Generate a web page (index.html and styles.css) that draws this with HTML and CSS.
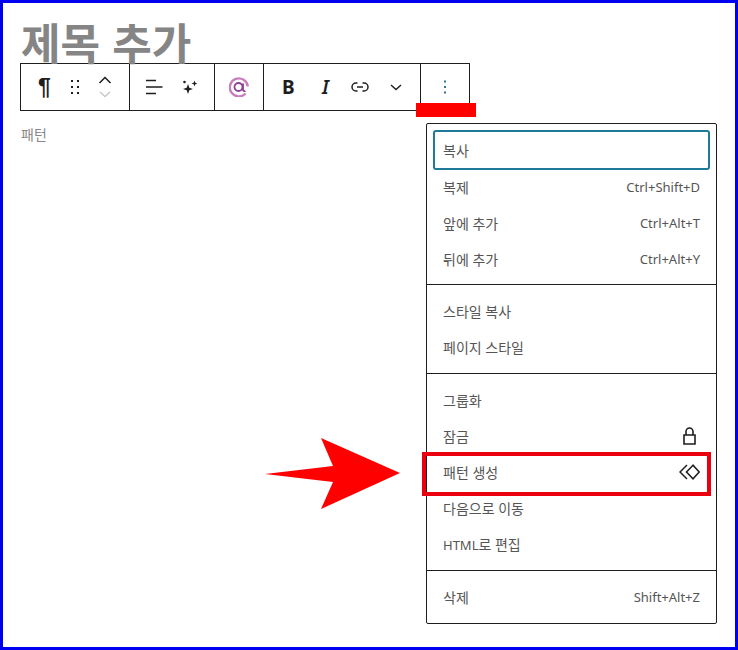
FILE: index.html
```html
<!DOCTYPE html>
<html lang="ko">
<head>
  <meta charset="UTF-8">
  <title>패턴 생성</title>
  <link rel="stylesheet" href="styles.css">
</head>
<body>
  <div class="frame">
    <h1 class="title">제목 추가</h1>

    <div class="toolbar">
      <div class="tool-group group-block">
        <span class="pilcrow">¶</span>
        <svg class="drag" width="10" height="16" viewBox="0 0 10 16"><g fill="#1e1e1e"><rect x="1" y="1" width="2" height="2"/><rect x="7" y="1" width="2" height="2"/><rect x="1" y="7" width="2" height="2"/><rect x="7" y="7" width="2" height="2"/><rect x="1" y="13" width="2" height="2"/><rect x="7" y="13" width="2" height="2"/></g></svg>
        <div class="movers">
          <svg width="14" height="8" viewBox="0 0 14 8"><path d="M1.500 7 7 1.500 12.500 7" fill="none" stroke="#1e1e1e" stroke-width="1.500"/></svg>
          <svg width="12" height="7" viewBox="0 0 12 7"><path d="M1 1 6 5.500 11 1" fill="none" stroke="#c8c8c8" stroke-width="1.400"/></svg>
        </div>
      </div>
      <div class="tool-group group-align">
        <svg width="18" height="16" viewBox="0 0 18 16"><path d="M1 1.500h10M1 8h16.500M1 14.500h10" fill="none" stroke="#1e1e1e" stroke-width="1.500"/></svg>
        <svg width="16" height="16" viewBox="0 0 16 16"><path fill="#1e1e1e" d="M6 5 7.300 8.700 11 10 7.300 11.300 6 15 4.700 11.300 1 10 4.700 8.700Z"/><path fill="#1e1e1e" d="M12.500 1.500 13.300 3.700 15.500 4.500 13.300 5.300 12.500 7.500 11.700 5.300 9.500 4.500 11.700 3.700Z"/><circle cx="2.500" cy="3" r="1.300" fill="#1e1e1e"/></svg>
      </div>
      <div class="tool-group group-ai">
        <svg width="20" height="20" viewBox="0 0 20 20"><path d="M16.500 16.500A9 9 0 1 1 18.800 9.500" fill="none" stroke="#c77fbc" stroke-width="2.400"/><circle cx="9.500" cy="10" r="4" fill="none" stroke="#8e3f96" stroke-width="1.800"/><path d="M14 6.500V12.500C14 14 15.300 14.500 16.500 14" fill="none" stroke="#8e3f96" stroke-width="1.800"/></svg>
      </div>
      <div class="tool-group group-format">
        <span class="fmt-bold">B</span>
        <span class="fmt-italic">I</span>
        <svg class="fmt-link" width="18" height="10" viewBox="0 0 18 10"><path d="M6.500 1H5a4 4 0 0 0 0 8h1.500M11.500 1H13a4 4 0 0 1 0 8h-1.500M6 5h6" fill="none" stroke="#1e1e1e" stroke-width="1.500"/></svg>
        <svg class="fmt-more" width="12" height="7" viewBox="0 0 12 7"><path d="M1 1 6 5.500 11 1" fill="none" stroke="#1e1e1e" stroke-width="1.400"/></svg>
      </div>
      <div class="tool-group group-more">
        <svg width="4" height="14" viewBox="0 0 4 14"><g fill="#2f7590"><rect x="1" y="0.500" width="2" height="2"/><rect x="1" y="6" width="2" height="2"/><rect x="1" y="11.500" width="2" height="2"/></g></svg>
      </div>
    </div>

    <p class="pattern-label">패턴</p>

    <div class="menu">
      <div class="menu-group first">
        <div class="menu-item is-focused"><span class="label">복사</span></div>
        <div class="menu-item"><span class="label">복제</span><span>Ctrl+Shift+D</span></div>
        <div class="menu-item"><span class="label">앞에 추가</span><span>Ctrl+Alt+T</span></div>
        <div class="menu-item"><span class="label">뒤에 추가</span><span>Ctrl+Alt+Y</span></div>
      </div>
      <div class="menu-group">
        <div class="menu-item"><span class="label">스타일 복사</span></div>
        <div class="menu-item"><span class="label">페이지 스타일</span></div>
      </div>
      <div class="menu-group">
        <div class="menu-item"><span class="label">그룹화</span></div>
        <div class="menu-item"><span class="label">잠금</span>
          <svg class="icon-lock" width="13" height="18" viewBox="0 0 13 18"><path d="M1 8h11v9H1zM3 8V4.500a3.500 3.500 0 0 1 7 0V8" fill="none" stroke="#1e1e1e" stroke-width="1.600"/></svg>
        </div>
        <div class="menu-item"><span class="label">패턴 생성</span>
          <svg width="21" height="16" viewBox="0 0 21 16"><path d="M8 1 1 8l7 7M14 1.200 7.500 8l6.500 6.800L20.200 8Z" fill="none" stroke="#1e1e1e" stroke-width="1.500"/></svg>
        </div>
        <div class="menu-item"><span class="label">다음으로 이동</span></div>
        <div class="menu-item"><span class="label"><span class="latin">HTML</span>로 편집</span></div>
      </div>
      <div class="menu-group">
        <div class="menu-item"><span class="label">삭제</span><span>Shift+Alt+Z</span></div>
      </div>
    </div>

    <!-- annotations drawn over the screenshot -->
    <div class="mark-bar"></div>
    <div class="mark-box"></div>
    <svg class="mark-arrow" width="138" height="74" viewBox="0 0 138 74"><path fill="#f00" d="M1 36 69 28 57 0 136 35 57 71 69 44Z"/></svg>
  </div>
</body>
</html>
```

FILE: styles.css
```css
* {
  box-sizing: border-box;
}
html, body {
  margin: 0;
  padding: 0;
}
body {
  background: #fff;
  font-family: "Noto Sans", "Noto Sans CJK KR", sans-serif;
  color: #1e1e1e;
}
.frame {
  position: relative;
  width: 738px;
  height: 650px;
  border: 3px solid #0000f0;
  padding: 17px 17px 0 17px;
}
.title {
  margin: 0 0 0 1px;
  height: 43px;
  font-family: "Noto Sans CJK KR", sans-serif;
  font-size: 43px;
  line-height: 43px;
  font-weight: 700;
  color: #858585;
}
.toolbar {
  display: flex;
  width: 450px;
  height: 48px;
  border: 1px solid #1e1e1e;
}
.tool-group {
  display: flex;
  align-items: center;
  height: 100%;
  border-right: 1px solid #1e1e1e;
}
.tool-group:last-child {
  border-right: 0;
}
.group-block {
  width: 109px;
  padding-left: 17px;
}
.pilcrow {
  width: 16px;
  font-family: "Liberation Sans", sans-serif;
  font-size: 23px;
  font-weight: 700;
  line-height: 1;
}
.drag {
  margin-left: 16px;
}
.movers {
  display: flex;
  flex-direction: column;
  align-items: center;
  gap: 7px;
  margin-left: 18px;
}
.group-align {
  width: 85px;
  padding-left: 15px;
  gap: 19px;
}
.group-ai {
  width: 49px;
  padding-left: 14px;
}
.group-format {
  width: 157px;
  padding-left: 18px;
}
.fmt-bold {
  width: 14px;
  font-size: 19px;
  font-weight: 700;
}
.fmt-italic {
  width: 10px;
  margin-left: 26px;
  font-size: 19px;
  font-weight: 600;
  font-style: italic;
}
.fmt-link {
  margin-left: 19px;
}
.fmt-more {
  margin-left: 21px;
}
.group-more {
  flex: 1;
  justify-content: center;
}
.pattern-label {
  margin: 13px 0 0 1px;
  font-family: "Noto Sans CJK KR", sans-serif;
  font-size: 14px;
  line-height: 20px;
  color: #888;
}
.menu {
  position: absolute;
  left: 423px;
  top: 120px;
  width: 291px;
  height: 501px;
  border: 1px solid #1e1e1e;
  border-radius: 2px;
  background: #fff;
}
.menu-group {
  padding: 8px 6px;
  border-bottom: 1px solid #1e1e1e;
}
.menu-group.first {
  padding: 7px 6px;
}
.menu-group:last-child {
  border-bottom: 0;
}
.menu-item {
  display: flex;
  justify-content: space-between;
  align-items: center;
  height: 36px;
  padding: 0 10px;
  font-size: 13px;
  color: #555;
}
.menu-item .label {
  font-size: 14px;
}
.menu-item .latin {
  font-size: 13px;
}
.menu-item.is-focused {
  height: 40px;
  margin: -1px 0;
  padding-left: 8px;
  border: 2px solid #1f7a99;
  border-radius: 3px;
}
.icon-lock {
  margin-right: 4px;
}
.mark-bar {
  position: absolute;
  left: 413px;
  top: 100px;
  width: 60px;
  height: 14px;
  background: #f00;
}
.mark-box {
  position: absolute;
  left: 419px;
  top: 449px;
  width: 289px;
  height: 44px;
  border: 4px solid #eb0010;
}
.mark-arrow {
  position: absolute;
  left: 261px;
  top: 435px;
}
```
